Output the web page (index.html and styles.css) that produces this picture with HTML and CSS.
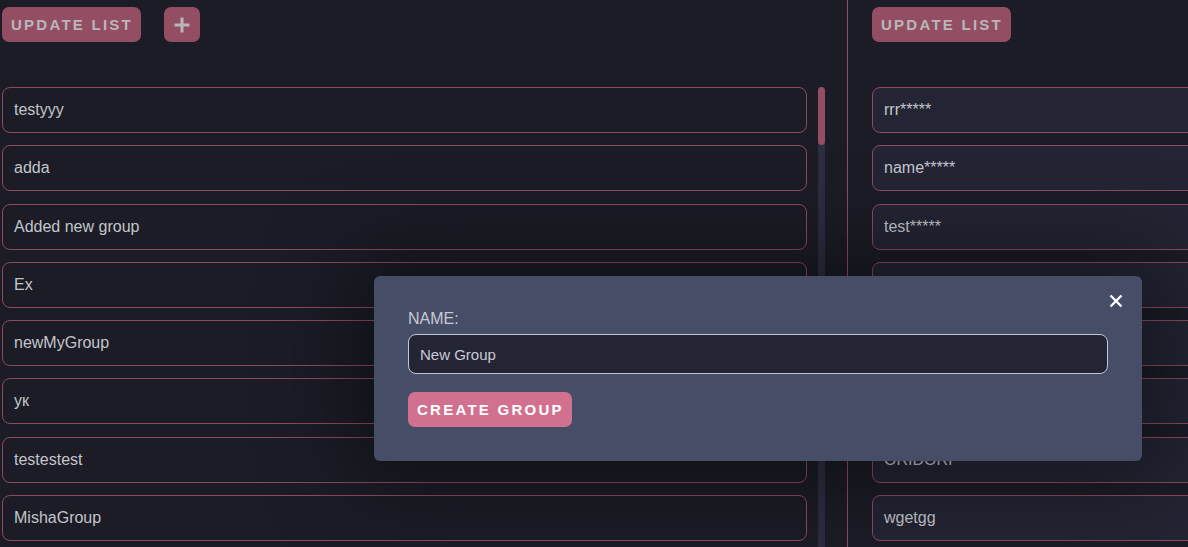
FILE: index.html
```html
<!DOCTYPE html>
<html>
<head>
<meta charset="utf-8">
<link rel="stylesheet" href="styles.css">
</head>
<body>
<div class="page">
  <section class="panel panel-left">
    <div class="toolbar">
      <button class="btn btn-muted">UPDATE LIST</button>
      <button class="btn btn-muted btn-icon" aria-label="Add">
        <svg width="16" height="16" viewBox="0 0 16 16"><path d="M8 0.5V15.5M0.5 8H15.5" stroke="#b9b6b9" stroke-width="3" fill="none"/></svg>
      </button>
    </div>
    <div class="list-wrap">
      <ul class="list">
        <li class="item">testyyy</li>
        <li class="item">adda</li>
        <li class="item">Added new group</li>
        <li class="item">Ex</li>
        <li class="item">newMyGroup</li>
        <li class="item">ук</li>
        <li class="item">testestest</li>
        <li class="item">MishaGroup</li>
      </ul>
      <div class="scrollbar"><div class="thumb"></div></div>
    </div>
  </section>
  <section class="panel panel-right">
    <div class="toolbar">
      <button class="btn btn-muted">UPDATE LIST</button>
    </div>
    <ul class="list">
      <li class="item item-filled">rrr*****</li>
      <li class="item item-filled">name*****</li>
      <li class="item item-filled">test*****</li>
      <li class="item item-filled">qwerty*****</li>
      <li class="item item-filled">user*****</li>
      <li class="item item-filled">admin*****</li>
      <li class="item item-filled">ORIDORI</li>
      <li class="item item-filled">wgetgg</li>
    </ul>
  </section>
</div>

<div class="modal">
  <button class="close" aria-label="Close">
    <svg width="14" height="14" viewBox="0 0 14 14"><path d="M1.5 1.5L12.5 12.5M12.5 1.5L1.5 12.5" stroke="#ffffff" stroke-width="2.4" fill="none"/></svg>
  </button>
  <label class="label" for="name">NAME:</label>
  <input id="name" class="input" type="text" value="New Group">
  <button class="btn btn-primary">CREATE GROUP</button>
</div>
</body>
</html>
```
FILE: styles.css
```css
html, body {
  margin: 0;
  padding: 0;
  background: #1b1c26;
  overflow: hidden;
  height: 547px;
}

body {
  font-family: "Liberation Sans", Arial, sans-serif;
  color: #c4c5cc;
}

.page {
  display: flex;
  width: 1700px;
}

.panel {
  box-sizing: border-box;
  padding-top: 7px;
}

.panel-left {
  width: 848px;
  padding-left: 2px;
  border-right: 1px solid #934c63;
}

.panel-right {
  width: 840px;
  padding-left: 24px;
}

.toolbar {
  display: flex;
  gap: 23px;
  height: 35px;
  margin-bottom: 45px;
}

.btn {
  border: none;
  border-radius: 7px;
  height: 35px;
  padding: 0 8px 0 9px;
  font-family: "Liberation Sans", Arial, sans-serif;
  font-weight: bold;
  font-size: 15px;
  letter-spacing: 0.15em;
  cursor: pointer;
  display: flex;
  align-items: center;
}

.btn-muted {
  background: #934e63;
  color: #b9b6b9;
}

.btn-icon {
  width: 36px;
  justify-content: center;
  padding: 0;
}

.btn-primary {
  background: #d2718f;
  color: #ffffff;
  padding: 0 8px 0 9px;
}

.list-wrap {
  display: flex;
  align-items: flex-start;
}

.list {
  list-style: none;
  margin: 0;
  padding: 0;
  display: flex;
  flex-direction: column;
  gap: 12.3px;
}

.panel-left .list,
.panel-right .list {
  width: 805px;
}

.item {
  box-sizing: border-box;
  height: 46px;
  border: 1px solid #8f4a60;
  border-radius: 8px;
  padding: 0 11px;
  display: flex;
  align-items: center;
  font-size: 16px;
  color: #c4c5cc;
}

.item-filled {
  background: #232534;
}

.scrollbar {
  margin-left: 11px;
  width: 7px;
  height: 470px;
  background: #2b2e41;
  border-radius: 4px 4px 0 0;
}

.thumb {
  height: 58px;
  background: #934e63;
  border-radius: 4px;
}

.modal {
  position: absolute;
  left: 374px;
  top: 276px;
  width: 768px;
  height: 185px;
  box-sizing: border-box;
  padding: 34px 34px 34px;
  background: #464e67;
  border-radius: 6px;
  box-shadow: 0 0 90px 25px rgba(0, 0, 0, 0.4);
  display: flex;
  flex-direction: column;
  align-items: flex-start;
}

.close {
  position: absolute;
  top: 18px;
  right: 19px;
  width: 14px;
  height: 14px;
  padding: 0;
  border: none;
  background: none;
  display: flex;
}

.label {
  font-size: 16px;
  color: #c6c9d6;
  line-height: 18px;
  margin-bottom: 6px;
}

.input {
  box-sizing: border-box;
  width: 700px;
  height: 40px;
  border: 1px solid #c3c6d2;
  border-radius: 8px;
  background: #242534;
  color: #c8cad4;
  font-family: "Liberation Sans", Arial, sans-serif;
  font-size: 15px;
  padding: 0 11px;
  margin: 0 0 18px;
  outline: none;
}
```
